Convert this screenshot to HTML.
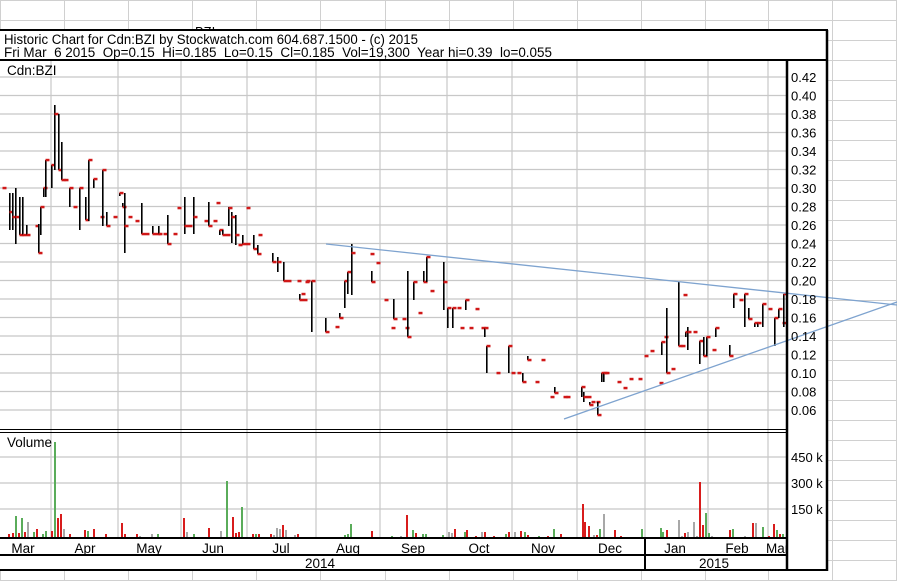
<!DOCTYPE html>
<html><head><meta charset="utf-8"><style>
html,body{margin:0;padding:0;background:#fff;width:897px;height:581px;overflow:hidden}
svg{display:block;font-family:"Liberation Sans",Arial,sans-serif}
</style></head><body>
<svg id="s" width="897" height="581" viewBox="0 0 897 581" xmlns="http://www.w3.org/2000/svg">
<g id="bg" stroke="#d0d0d0" stroke-width="1"></g>
<text x="195" y="36" font-size="13" fill="#000">BZI</text>
<rect x="0" y="30" width="827" height="541" fill="#fff"/>
<g id="grid" stroke="#c8c8c8" stroke-width="1.2"></g>
<g id="bars"></g>
<g id="vol"></g>
<line x1="326" y1="244" x2="897" y2="305" stroke="#7ea3cf" stroke-width="1.3"/>
<line x1="564" y1="419" x2="897" y2="302" stroke="#7ea3cf" stroke-width="1.3"/>
<g stroke="#000" fill="none">
<line x1="0" y1="30" x2="828" y2="30" stroke-width="2"/>
<line x1="0" y1="60" x2="828" y2="60" stroke-width="2"/>
<line x1="827" y1="30" x2="827" y2="571" stroke-width="2.5"/>
<line x1="787" y1="60" x2="787" y2="571" stroke-width="2.5"/>
<line x1="0" y1="429.5" x2="787" y2="429.5" stroke-width="1"/>
<line x1="0" y1="432.5" x2="787" y2="432.5" stroke-width="1"/>
<line x1="0" y1="538" x2="787" y2="538" stroke-width="2"/>
<line x1="0" y1="555" x2="787" y2="555" stroke-width="2"/>
<line x1="0" y1="570" x2="828" y2="570" stroke-width="2"/>
<line x1="645" y1="538" x2="645" y2="570" stroke-width="2"/>
</g>
<g font-size="13.5" fill="#000">
<text x="4" y="44" textLength="414" lengthAdjust="spacingAndGlyphs">Historic Chart for Cdn:BZI by Stockwatch.com 604.687.1500 - (c) 2015</text>
<text x="4" y="57" xml:space="preserve" textLength="548" lengthAdjust="spacingAndGlyphs">Fri Mar  6 2015  Op=0.15  Hi=0.185  Lo=0.15  Cl=0.185  Vol=19,300  Year hi=0.39  lo=0.055</text>
<text x="7" y="75">Cdn:BZI</text>
<text x="7" y="447">Volume</text>
</g>
<g id="ax" font-size="13" fill="#000"></g>
<g font-size="13.5" fill="#000" text-anchor="middle">
<text x="23" y="553">Mar</text><text x="85" y="553">Apr</text><text x="149" y="553">May</text>
<text x="213" y="553">Jun</text><text x="281" y="553">Jul</text><text x="348" y="553">Aug</text>
<text x="413" y="553">Sep</text><text x="479" y="553">Oct</text><text x="543" y="553">Nov</text>
<text x="610" y="553">Dec</text><text x="675" y="553">Jan</text><text x="737" y="553">Feb</text>
<text x="320" y="568">2014</text><text x="714" y="568">2015</text>
</g>
<svg x="760" y="538" width="27" height="17"><text x="6" y="15" font-size="13.5">Mar</text></svg>
</svg>
<script>
var NS="http://www.w3.org/2000/svg";
function el(p,t,a){var e=document.createElementNS(NS,t);for(var k in a)e.setAttribute(k,a[k]);p.appendChild(e);return e;}
var bg=document.getElementById('bg');
[0,64,128,192,256,320,385,449,513,577,641,705,768,832,896].forEach(function(x){el(bg,'line',{x1:x+.5,y1:0,x2:x+.5,y2:581});});
for(var y=0;y<=581;y+=20)el(bg,'line',{x1:0,y1:y+.5,x2:897,y2:y+.5});
var g=document.getElementById('grid');
for(var i=0;i<=18;i++){var yy=77+i*18.5;el(g,'line',{x1:0,y1:yy,x2:787,y2:yy});}
[457,483,509].forEach(function(yy){el(g,'line',{x1:0,y1:yy,x2:787,y2:yy});});
[51,118,181,247,316,380,447,512,577,645,708,768].forEach(function(x){el(g,'line',{x1:x,y1:60,x2:x,y2:538});});
var ax=document.getElementById('ax');
for(var i=0;i<=18;i++){var p=(0.42-i*0.02).toFixed(2);var t=el(ax,'text',{x:791,y:77+i*18.5+5});t.textContent=p;}
[[457,'450 k'],[483,'300 k'],[509,'150 k']].forEach(function(a){var t=el(ax,'text',{x:791,y:a[0]+5});t.textContent=a[1];});
var D=[[2,188,188,188],[9,193,230,212],[12,193,230,217],[15,188,244,217],[19,197,235,235],[22,197,235,235],[26,225,235,235],[35,226,226,226],[38,224,253,253],[40,207,235,207],[43,188,197,188],[45,160,197,160],[51,165,188,165],[54,105,170,114],[58,114,170,170],[61,142,180,180],[64,180,180,180],[69,188,207,188],[73,207,207,207],[79,188,230,188],[85,197,220,220],[88,160,221,160],[93,179,188,179],[100,217,217,217],[102,170,226,170],[106,212,226,226],[113,217,217,217],[119,193,196,193],[122,203,207,207],[124,193,253,226],[128,217,217,217],[135,221,221,221],[141,203,234,234],[145,234,234,234],[152,226,234,234],[156,234,234,234],[158,226,234,234],[163,234,234,234],[167,215,244,244],[173,234,234,234],[177,208,208,208],[184,197,234,226],[188,226,226,226],[193,197,234,217],[204,221,221,221],[208,202,226,226],[213,221,221,221],[216,203,203,203],[219,230,235,230],[222,230,235,235],[226,235,235,235],[228,207,226,208],[231,212,243,217],[235,215,245,235],[238,245,245,245],[242,235,244,244],[246,244,244,244],[246,208,208,208],[253,235,249,249],[257,245,254,254],[258,235,235,235],[272,253,262,262],[277,257,272,262],[283,262,281,281],[287,281,281,281],[297,281,281,281],[299,294,300,300],[301,294,294,294],[303,300,300,300],[305,282,282,282],[306,281,281,281],[311,281,332,281],[325,318,332,332],[335,327,327,327],[339,313,318,318],[344,281,308,281],[347,272,294,272],[351,244,295,253],[370,254,254,254],[371,271,282,282],[376,263,263,263],[384,300,300,300],[391,328,328,328],[393,299,319,319],[402,319,319,319],[405,328,328,328],[407,271,337,337],[413,282,300,282],[418,313,313,313],[423,271,282,282],[426,257,282,257],[430,291,291,291],[443,262,310,282],[447,308,328,308],[452,308,328,308],[457,308,308,308],[460,328,328,328],[465,300,310,300],[469,328,328,328],[475,309,309,309],[481,328,328,328],[484,328,337,328],[486,346,373,346],[496,373,373,373],[508,346,373,346],[511,373,373,373],[517,373,373,373],[522,373,382,382],[527,356,360,360],[535,382,382,382],[541,360,360,360],[550,397,397,397],[554,387,393,393],[563,397,397,397],[566,397,397,397],[581,387,397,387],[583,392,402,397],[587,397,397,397],[589,402,405,405],[591,402,402,402],[596,402,402,402],[597,402,415,415],[601,373,382,373],[603,373,382,373],[605,373,373,373],[617,382,382,382],[623,388,388,388],[629,379,379,379],[638,379,379,379],[644,356,356,356],[650,351,351,351],[659,383,383,383],[661,342,355,342],[664,337,337,337],[666,308,373,373],[671,369,369,369],[678,282,346,346],[681,346,346,346],[683,295,295,295],[685,332,337,332],[687,327,350,332],[693,332,332,332],[699,341,364,341],[703,337,356,356],[706,337,356,337],[712,350,350,350],[715,328,337,328],[729,345,356,356],[733,294,308,294],[739,300,300,300],[744,294,327,294],[748,308,319,319],[754,323,327,323],[757,323,327,323],[762,304,327,304],[768,309,309,309],[774,318,346,318],[778,309,318,309],[782,323,323,323],[783,294,327,294]];
var b=document.getElementById('bars');
D.forEach(function(d){if(d[2]>d[1])el(b,'rect',{x:d[0],y:d[1],width:1.6,height:d[2]-d[1],fill:'#000'});el(b,'rect',{x:d[0]+0.5,y:d[3]-1.2,width:4,height:2.5,fill:'#d01818'});});
var R='#d81c1c',G='#5aac5a',Y='#a8a8a8';
var V=[[8,534,R],[12,533,R],[15,516,G],[18,533,R],[21,518,G],[24,532,R],[27,522,Y],[30,537,R],[33,532,G],[36,529,R],[39,537,Y],[42,534,G],[45,531,G],[51,531,R],[54,442,G],[57,518,R],[60,514,R],[63,529,Y],[69,534,R],[72,537,R],[75,537,Y],[78,537,G],[84,530,R],[87,531,G],[93,529,R],[99,537,R],[102,537,R],[105,534,R],[112,537,G],[115,537,G],[118,537,G],[121,523,R],[124,534,R],[127,537,Y],[133,537,R],[136,534,R],[139,536,Y],[142,537,Y],[151,534,Y],[157,534,G],[160,537,R],[163,537,Y],[166,537,Y],[169,537,R],[172,537,R],[175,537,G],[183,518,R],[186,532,Y],[193,534,G],[202,537,R],[208,528,R],[211,537,G],[214,537,Y],[217,537,R],[220,531,Y],[226,481,G],[229,537,R],[232,517,R],[235,533,R],[238,532,R],[241,507,G],[244,537,G],[252,534,R],[255,534,G],[258,534,R],[270,534,R],[273,535,Y],[276,528,Y],[279,529,Y],[282,525,R],[285,530,Y],[294,535,Y],[297,534,R],[302,537,G],[303,537,R],[309,537,Y],[325,537,R],[334,537,G],[337,537,G],[344,535,G],[347,534,G],[350,524,G],[368,537,Y],[371,531,R],[374,537,G],[383,537,R],[389,537,R],[391,536,G],[400,536,Y],[403,537,R],[406,515,R],[412,530,G],[415,533,R],[422,534,G],[425,534,G],[428,537,R],[442,535,G],[445,537,R],[448,532,Y],[451,533,Y],[454,529,R],[464,532,G],[466,530,R],[472,537,Y],[475,536,R],[478,537,Y],[481,532,Y],[484,532,R],[493,536,R],[505,534,G],[508,532,R],[514,532,Y],[520,531,R],[524,532,G],[527,535,R],[532,537,R],[538,536,G],[547,536,R],[553,529,G],[557,537,Y],[560,534,R],[564,537,Y],[582,504,R],[584,522,R],[588,526,R],[593,535,Y],[596,535,R],[599,529,G],[603,514,Y],[614,530,R],[620,536,R],[627,537,Y],[636,537,Y],[641,529,G],[648,537,G],[657,537,R],[660,528,G],[662,532,G],[666,530,R],[669,537,Y],[675,537,Y],[678,520,Y],[681,536,Y],[684,533,R],[687,532,Y],[693,522,Y],[696,536,Y],[699,482,R],[702,525,R],[705,513,G],[708,533,G],[711,536,Y],[714,537,G],[720,537,R],[723,537,G],[729,530,R],[732,529,G],[738,537,R],[744,536,Y],[747,537,R],[752,523,R],[755,523,Y],[762,527,G],[768,536,R],[773,524,R],[776,530,G],[779,534,R],[782,534,G]];
var v=document.getElementById('vol');
V.forEach(function(d){el(v,'rect',{x:d[0],y:d[1],width:2,height:538-d[1],fill:d[2]});});
</script>
</body></html>
